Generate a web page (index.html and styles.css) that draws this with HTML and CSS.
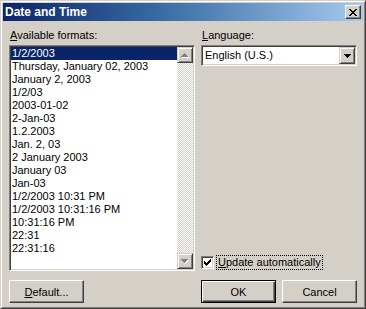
FILE: index.html
```html
<!DOCTYPE html>
<html lang="en">
<head>
    <meta charset="UTF-8">
    <title>Date and Time</title>
    <link rel="stylesheet" href="styles.css">
</head>
<body>
    <div class="window">
        <div class="titlebar">
            <span class="title">Date and Time</span>
            <span class="close-btn">
                <svg width="8" height="7" viewBox="0 0 8 7" shape-rendering="crispEdges">
                    <path d="M0 0h2v1h-2z M6 0h2v1h-2z M1 1h2v1h-2z M5 1h2v1h-2z M2 2h4v1h-4z M3 3h2v1h-2z M2 4h4v1h-4z M1 5h2v1h-2z M5 5h2v1h-2z M0 6h2v1h-2z M6 6h2v1h-2z" fill="#000"/>
                </svg>
            </span>
        </div>

        <div class="dialog-body">
            <!-- left: list of formats -->
            <div class="col-left">
                <div class="field-label"><u>A</u>vailable formats:</div>
                <div class="listbox sunken">
                    <ul class="list-items">
                        <li class="selected">1/2/2003</li>
                        <li>Thursday, January 02, 2003</li>
                        <li>January 2, 2003</li>
                        <li>1/2/03</li>
                        <li>2003-01-02</li>
                        <li>2-Jan-03</li>
                        <li>1.2.2003</li>
                        <li>Jan. 2, 03</li>
                        <li>2 January 2003</li>
                        <li>January 03</li>
                        <li>Jan-03</li>
                        <li>1/2/2003 10:31 PM</li>
                        <li>1/2/2003 10:31:16 PM</li>
                        <li>10:31:16 PM</li>
                        <li>22:31</li>
                        <li>22:31:16</li>
                    </ul>
                    <div class="scrollbar">
                        <span class="scroll-btn">
                            <svg width="8" height="5" viewBox="0 0 8 5" shape-rendering="crispEdges">
                                <path d="M4 1h1v1h-1z M3 2h3v1h-3z M2 3h5v1h-5z M1 4h7v1h-7z" fill="#fff"/>
                                <path d="M3 0h1v1h-1z M2 1h3v1h-3z M1 2h5v1h-5z M0 3h7v1h-7z" fill="#808080"/>
                            </svg>
                        </span>
                        <span class="scroll-track"></span>
                        <span class="scroll-btn">
                            <svg width="8" height="5" viewBox="0 0 8 5" shape-rendering="crispEdges">
                                <path d="M1 1h7v1h-7z M2 2h5v1h-5z M3 3h3v1h-3z M4 4h1v1h-1z" fill="#fff"/>
                                <path d="M0 0h7v1h-7z M1 1h5v1h-5z M2 2h3v1h-3z M3 3h1v1h-1z" fill="#808080"/>
                            </svg>
                        </span>
                    </div>
                </div>
            </div>

            <!-- right: language + auto update -->
            <div class="col-right">
                <div class="field-label"><u>L</u>anguage:</div>
                <div class="combo sunken">
                    <span class="combo-text">English (U.S.)</span>
                    <span class="combo-btn">
                        <svg width="7" height="4" viewBox="0 0 7 4" shape-rendering="crispEdges">
                            <path d="M0 0h7v1h-7z M1 1h5v1h-5z M2 2h3v1h-3z M3 3h1v1h-1z" fill="#000"/>
                        </svg>
                    </span>
                </div>
                <div class="check-row">
                    <span class="checkbox sunken">
                        <svg width="9" height="9" viewBox="0 0 9 9" shape-rendering="crispEdges">
                            <path d="M1 3h1v3h-1z M2 4h1v3h-1z M3 5h1v3h-1z M4 4h1v3h-1z M5 3h1v3h-1z M6 2h1v3h-1z M7 1h1v3h-1z" fill="#000"/>
                        </svg>
                    </span>
                    <span class="check-label"><u>U</u>pdate automatically</span>
                </div>
            </div>

            <div class="btn-row-left">
                <span class="btn"><u>D</u>efault...</span>
            </div>
            <div class="btn-row-right">
                <span class="btn btn-default">OK</span>
                <span class="btn">Cancel</span>
            </div>
        </div>
    </div>
</body>
</html>
```

FILE: styles.css
```css
body {
    margin: 0;
    padding: 0;
    font-family: "Liberation Sans", Arial, sans-serif;
    font-size: 11px;
    color: #000;
}

.window {
    width: 366px;
    height: 309px;
    box-sizing: border-box;
    background-color: #d4d0c8;
    border: 1px solid;
    border-color: #d4d0c8 #404040 #404040 #d4d0c8;
    display: flex;
    flex-direction: column;
}

/* inner frame of the window */
.window {
    box-shadow: inset 1px 1px #fff, inset -1px -1px #808080;
    padding: 2px;
}

.titlebar {
    height: 18px;
    background: linear-gradient(to right, #0a246a, #3a6ea5 45%, #a6caf0);
    display: flex;
    align-items: center;
    justify-content: space-between;
    padding: 0 2px 0 2px;
}

.title {
    color: #fff;
    font-weight: bold;
    font-size: 12px;
}

.close-btn {
    width: 16px;
    height: 14px;
    box-sizing: border-box;
    background-color: #d4d0c8;
    border: 1px solid;
    border-color: #fff #404040 #404040 #fff;
    box-shadow: inset -1px -1px #808080;
    display: flex;
    align-items: center;
    justify-content: center;
}

.dialog-body {
    flex: 1;
    display: grid;
    grid-template-columns: 186px 156px;
    grid-template-rows: 242px 23px;
    column-gap: 6px;
    row-gap: 9px;
    padding: 8px 6px 0 6px;
}

.col-left,
.col-right {
    display: flex;
    flex-direction: column;
}

.field-label {
    height: 13px;
    line-height: 13px;
    margin-bottom: 3px;
    padding-left: 1px;
}

.sunken {
    box-sizing: border-box;
    border: 1px solid;
    border-color: #808080 #fff #fff #808080;
    box-shadow: inset 1px 1px #404040, inset -1px -1px #d4d0c8;
    padding: 1px;
    background-color: #fff;
}

.listbox {
    height: 226px;
    display: flex;
}

.list-items {
    flex: 1;
    list-style: none;
    margin: 0;
    padding: 0;
}

.list-items li {
    height: 13px;
    line-height: 13px;
    padding-left: 1px;
    white-space: nowrap;
}

.list-items li.selected {
    background-color: #0a246a;
    color: #fff;
}

.scrollbar {
    width: 16px;
    display: flex;
    flex-direction: column;
}

.scroll-btn {
    width: 16px;
    height: 16px;
    box-sizing: border-box;
    background-color: #d4d0c8;
    border: 1px solid;
    border-color: #d4d0c8 #404040 #404040 #d4d0c8;
    box-shadow: inset 1px 1px #fff, inset -1px -1px #808080;
    display: flex;
    align-items: center;
    justify-content: center;
}

.scroll-track {
    flex: 1;
    background-image: repeating-conic-gradient(#d4d0c8 0 25%, #fff 0 50%);
    background-size: 2px 2px;
}

.combo {
    height: 21px;
    display: flex;
    align-items: stretch;
}

.combo-text {
    flex: 1;
    line-height: 17px;
    padding-left: 2px;
}

.combo-btn {
    width: 16px;
    box-sizing: border-box;
    background-color: #d4d0c8;
    border: 1px solid;
    border-color: #d4d0c8 #404040 #404040 #d4d0c8;
    box-shadow: inset 1px 1px #fff, inset -1px -1px #808080;
    display: flex;
    align-items: center;
    justify-content: center;
}

.check-row {
    margin-top: auto;
    margin-bottom: 1px;
    display: flex;
    align-items: center;
    gap: 2px;
}

.checkbox {
    width: 13px;
    height: 13px;
    display: flex;
    align-items: center;
    justify-content: center;
    padding: 0;
}

.check-label {
    border: 1px dotted #000;
    line-height: 13px;
    padding: 0 1px;
}

.btn-row-left,
.btn-row-right {
    display: flex;
    gap: 6px;
}

.btn {
    width: 75px;
    height: 23px;
    box-sizing: border-box;
    background-color: #d4d0c8;
    border: 1px solid;
    border-color: #fff #404040 #404040 #fff;
    box-shadow: inset -1px -1px #808080;
    display: flex;
    align-items: center;
    justify-content: center;
}

.btn-default {
    border: 1px solid #000;
    box-shadow: inset 1px 1px #fff, inset -1px -1px #404040, inset -2px -2px #808080;
}
```
